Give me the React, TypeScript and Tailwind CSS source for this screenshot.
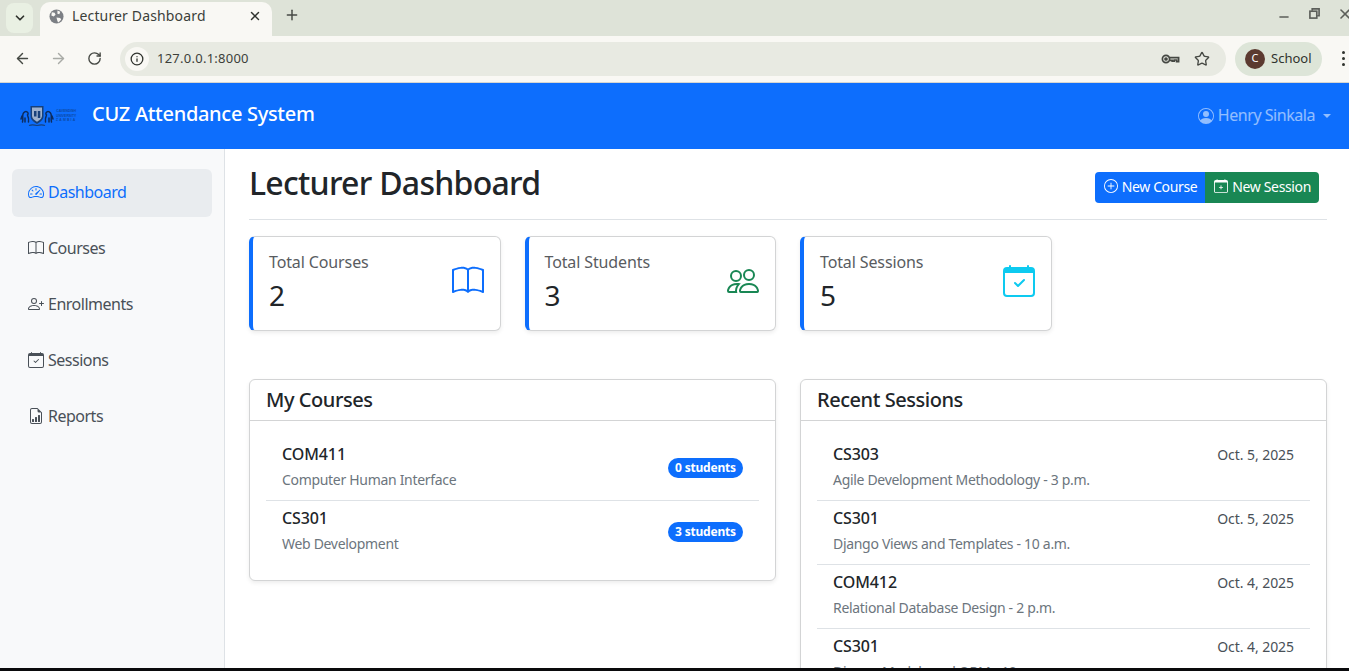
import React from 'react';
import {
  BsSpeedometer2,
  BsBook,
  BsPersonPlus,
  BsCalendarCheck,
  BsFileEarmarkBarGraph,
  BsPlusCircle,
  BsCalendarPlus,
  BsPersonCircle,
  BsPeople,
} from 'react-icons/bs';
import { ArrowLeft, ArrowRight, RotateCw, Info, Star, Plus, X, ChevronDown, Minus } from 'lucide-react';

const navItems = [
  { label: 'Dashboard', icon: BsSpeedometer2, active: true },
  { label: 'Courses', icon: BsBook },
  { label: 'Enrollments', icon: BsPersonPlus },
  { label: 'Sessions', icon: BsCalendarCheck },
  { label: 'Reports', icon: BsFileEarmarkBarGraph },
];

const stats = [
  { label: 'Total Courses', value: '2', icon: BsBook, color: 'text-[#0d6efd]' },
  { label: 'Total Students', value: '3', icon: BsPeople, color: 'text-[#198754]' },
  { label: 'Total Sessions', value: '5', icon: BsCalendarCheck, color: 'text-[#0dcaf0]' },
];

const courses = [
  { code: 'COM411', name: 'Computer Human Interface', students: '0 students' },
  { code: 'CS301', name: 'Web Development', students: '3 students' },
];

const sessions = [
  { code: 'CS303', name: 'Agile Development Methodology - 3 p.m.', date: 'Oct. 5, 2025' },
  { code: 'CS301', name: 'Django Views and Templates - 10 a.m.', date: 'Oct. 5, 2025' },
  { code: 'COM412', name: 'Relational Database Design - 2 p.m.', date: 'Oct. 4, 2025' },
  { code: 'CS301', name: 'Django Models and ORM - 10 a.m.', date: 'Oct. 4, 2025' },
];

const BrowserChrome = () => (
  <div className="shrink-0 font-['Noto_Sans',sans-serif]">
    {/* Tab strip */}
    <div className="h-9 bg-[#dee3d8] flex items-end pl-[6px] relative">
      <div className="w-[27px] h-[30px] mb-[3px] rounded-lg bg-[#e9f0e3] flex items-center justify-center">
        <ChevronDown size={14} strokeWidth={3} className="text-[#30332e]" />
      </div>
      <div className="ml-[7px] w-[232px] h-[34px] bg-[#f9f8f4] rounded-t-[10px] flex items-center pl-[9px] pr-[10px] pb-[6px] text-[#3c3f3a]">
        <svg width="15" height="15" viewBox="0 0 16 16" className="shrink-0">
          <circle cx="8" cy="8" r="7.5" fill="#7c7f84" />
          <path d="M3 3.5l3 .5 1 2-2 2-2.500-1zM9 1.500l3 1.500-1 2.500-2-.5zM8 9l4 .5 1 2-3 3-1-1.500z" fill="#f9f8f4" />
        </svg>
        <span className="ml-[8px] text-[14px] leading-none tracking-[0.15px] flex-1 -mt-[1px]">Lecturer Dashboard</span>
        <X size={14} strokeWidth={2.5} className="text-[#30332e]" />
      </div>
      <Plus size={16} strokeWidth={2.2} className="ml-[12px] mb-[13px] text-[#474a45]" />
      <div className="ml-auto flex items-center text-[#5c5f5a] mb-[12px]">
        <Minus size={14} strokeWidth={2.5} className="mr-[18px] mt-[7px]" />
        <svg width="11" height="11" viewBox="0 0 12 12" fill="none" stroke="currentColor" strokeWidth="1.8" className="mr-[17px]">
          <path d="M3.500 3V1h7.500v7.500H9" />
          <rect x="1" y="3.500" width="7.500" height="7.500" />
        </svg>
        <X size={16} strokeWidth={2.4} className="-mr-[4px]" />
      </div>
    </div>
    {/* Toolbar */}
    <div className="h-[47px] bg-[#f9f8f4] border-b border-[#d5d6d2] flex items-center pl-[14px] pb-[1px]">
      <ArrowLeft size={17} strokeWidth={2} className="text-[#454843]" />
      <ArrowRight size={17} strokeWidth={2} className="ml-[19px] text-[#a9aba6]" />
      <RotateCw size={15} strokeWidth={2.2} className="ml-[20px] text-[#454843]" />
      <div className="ml-[18px] w-[1106px] h-[34px] rounded-full bg-[#e8eae2] flex items-center pl-[5px] pr-[16px]">
        <div className="w-6 h-6 rounded-full bg-[#f9f8f4] flex items-center justify-center">
          <Info size={14} strokeWidth={2.2} className="text-[#30332e]" />
        </div>
        <span className="ml-[8px] pt-[1px] text-[13px] text-[#3c3f3a] flex-1 tracking-[0.25px]">127.0.0.1:8000</span>
        <svg width="19" height="12" viewBox="0 0 19 12" fill="none" stroke="#454843" strokeWidth="1.7">
          <circle cx="5" cy="6" r="3.600" />
          <circle cx="5" cy="6" r="1" fill="#454843" />
          <path d="M8.600 4.600h9v4h-2v-1.600h-2.400v1.200h-2V7.400H8.600" />
        </svg>
        <Star size={16} strokeWidth={2} className="ml-[14px] text-[#454843]" />
      </div>
      <div className="ml-[9px] w-[87px] h-[34px] rounded-full bg-[#dde5d8] flex items-center pl-[10px]">
        <div className="w-5 h-5 rounded-full bg-[#5b3a30] text-white text-[11px] flex items-center justify-center">C</div>
        <span className="ml-[6px] pt-[1px] text-[13px] text-[#30332e]">School</span>
      </div>
      <div className="ml-[20px] flex flex-col gap-[3px]">
        <span className="w-[3px] h-[3px] rounded-full bg-[#30332e]" />
        <span className="w-[3px] h-[3px] rounded-full bg-[#30332e]" />
        <span className="w-[3px] h-[3px] rounded-full bg-[#30332e]" />
      </div>
    </div>
  </div>
);

// small dark crest + wordmark, barely legible at this size
const Logo = () => (
  <div className="flex items-center w-[72px] text-[#0c4aa6]">
    <svg width="34" height="24" viewBox="0 0 34 24" className="shrink-0">
      <path d="M10.500 2h13v10c0 4-3.500 6-6.500 8-3-2-6.500-4-6.500-8z" fill="#17407a" />
      <path d="M12 3.500h10v8c0 3-2.600 4.800-5 6.300-2.400-1.500-5-3.300-5-6.300z" fill="#9db0cc" />
      <path d="M14 7h2.500v5.500H14zM17.800 7h2.500v7h-2.500z" fill="#17407a" />
      <g fill="none" stroke="#0d2c5e" strokeWidth="1.500" strokeLinecap="round">
        <path d="M2.500 18c1-3-.5-5 .5-8 .7-1.800 2.500-3 4-2.200 1.500.8 1.300 2.400.5 3.200.8 1.800 1.500 4 1 7" />
        <path d="M5 18v-4M2 12l-1 3" />
        <path d="M31.500 18c-1-3 .5-5-.5-8-.7-1.800-2.500-3-4-2.200-1.500.8-1.300 2.400-.5 3.200-.8 1.800-1.500 4-1 7" />
        <path d="M29 18v-4M32 12l1 3" />
      </g>
      <path d="M9 21.500c3-1.200 5-.8 8 0 3-.8 5-1.200 8 0" fill="none" stroke="#17407a" strokeWidth="1.200" />
    </svg>
    <div className="ml-[2px] flex flex-col items-center text-[3.400px] leading-[4.400px] font-bold font-['Liberation_Sans',sans-serif] whitespace-nowrap">
      <span>CAVENDISH</span>
      <span>UNIVERSITY</span>
      <span className="tracking-[1.200px]">ZAMBIA</span>
    </div>
  </div>
);

const Navbar = () => (
  <nav className="h-[66px] shrink-0 bg-[#0d6efd] flex items-center pl-[20px] pr-[18px]">
    <Logo />
    <span className="pb-[4px] text-white text-[20px] font-medium tracking-[-0.3px]">CUZ Attendance System</span>
    <div className="ml-auto pb-[1px] flex items-center text-white/55 text-[16px]">
      <BsPersonCircle size={16} />
      <span className="ml-1 pb-[1px] tracking-[-0.46px]">Henry Sinkala</span>
      <span className="ml-2 w-0 h-0 border-x-[4.500px] border-x-transparent border-t-[4.500px] border-t-white/55" />
    </div>
  </nav>
);

const Sidebar = () => (
  <aside className="w-[225px] shrink-0 bg-[#f8f9fa] border-r border-[#dee2e6] pt-5 px-3">
    <ul className="flex flex-col gap-2">
      {navItems.map((item) => {
        const Icon = item.icon;
        return (
          <li
            key={item.label}
            className={`h-12 rounded-md pl-4 pb-[2px] flex items-center text-[16px] tracking-[-0.5px] ${
              item.active ? 'bg-[#e9ecef] text-[#0d6efd]' : 'text-[#495057]'
            }`}
          >
            <Icon size={16} className="mr-1 shrink-0" />
            {item.label}
          </li>
        );
      })}
    </ul>
  </aside>
);

const StatCard = ({ label, value, icon: Icon, color }: (typeof stats)[number]) => (
  <div className="h-[95px] bg-white rounded-md border border-[#d3d4d5] border-l-4 border-l-[#0d6efd] shadow-[0_2px_4px_rgba(0,0,0,0.075)] px-4 pb-[5px] flex items-center justify-between">
    <div>
      <div className="text-[16px] leading-6 tracking-[-0.12px] text-[#595c5f]">{label}</div>
      <div className="mt-[4px] text-[28px] leading-[34px] text-[#212529]">{value}</div>
    </div>
    <Icon size={32} className={color} />
  </div>
);

const Panel = ({ title, children }: { title: string; children: React.ReactNode }) => (
  <div className="bg-white rounded-md border border-[#d3d4d5] shadow-[0_2px_4px_rgba(0,0,0,0.075)]">
    <div className="h-[41px] px-4 flex items-center border-b border-[#d3d4d5] text-[20px] tracking-[-0.45px] font-medium text-[#212529]">
      {title}
    </div>
    <div className="p-4">{children}</div>
  </div>
);

const Row = ({ code, name, right, last }: { code: string; name: string; right: React.ReactNode; last?: boolean }) => (
  <div className={`px-4 flex items-center justify-between ${last ? 'h-[63px] pb-[5px]' : 'h-16 pb-[6px] border-b border-[#dee2e6]'}`}>
    <div>
      <div className="text-[16px] leading-6 font-medium tracking-[-0.1px] text-[#212529]">{code}</div>
      <div className="mt-[3px] text-[14px] leading-[21px] tracking-[-0.31px] text-[#6c757d]">{name}</div>
    </div>
    {right}
  </div>
);

export default function App() {
  return (
    <div className="h-[671px] overflow-hidden flex flex-col bg-white font-['Noto_Sans',sans-serif]">
      <BrowserChrome />
      <Navbar />
      <div className="flex-1 min-h-0 flex overflow-hidden">
        <Sidebar />
        <main className="flex-1 min-w-0 pt-4 pl-6 pr-[22px]">
          {/* Page heading */}
          <div className="h-[55px] pb-[11px] border-b border-[#dee2e6] flex items-center justify-between">
            <h1 className="mb-[8px] text-[32px] leading-[38px] font-medium tracking-[-0.72px] text-[#212529]">Lecturer Dashboard</h1>
            <div className="flex mr-[8px] mt-[1px] text-white text-[14px] leading-[21px] tracking-[-0.36px]">
              <button className="h-[31px] pl-[9px] pr-2 pb-[2px] flex items-center gap-1 bg-[#0d6efd] rounded-l">
                <BsPlusCircle size={14} />
                New Course
              </button>
              <button className="h-[31px] pl-[9px] pr-2 pb-[2px] flex items-center gap-1 bg-[#198754] rounded-r">
                <BsCalendarPlus size={14} />
                New Session
              </button>
            </div>
          </div>

          <div className="mt-4 grid grid-cols-4 gap-6">
            {stats.map((s) => (
              <StatCard key={s.label} {...s} />
            ))}
          </div>

          <div className="mt-12 grid grid-cols-2 gap-6 items-start">
            <Panel title="My Courses">
              {courses.map((c, i) => (
                <Row
                  key={c.code}
                  code={c.code}
                  name={c.name}
                  last={i === courses.length - 1}
                  right={
                    <span className="w-[75px] h-5 mt-[4px] rounded-full bg-[#0d6efd] text-white text-[12px] tracking-[-0.2px] font-bold flex items-center justify-center">
                      {c.students}
                    </span>
                  }
                />
              ))}
            </Panel>
            <Panel title="Recent Sessions">
              {sessions.map((s, i) => (
                <Row
                  key={s.code + i}
                  code={s.code}
                  name={s.name}
                  last={i === sessions.length - 1}
                  right={<span className="self-start mt-[7px] text-[14px] leading-[21px] tracking-[-0.06px] text-[#495057]">{s.date}</span>}
                />
              ))}
            </Panel>
          </div>
        </main>
      </div>
      <div className="h-[3px] shrink-0 bg-[#0a0a0c]" />
    </div>
  );
}
